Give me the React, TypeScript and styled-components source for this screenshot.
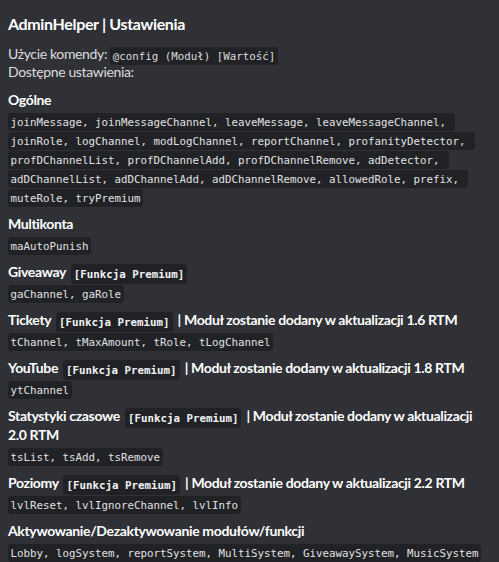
import React from "react";
import styled, { createGlobalStyle } from "styled-components";

const Global = createGlobalStyle`
  html, body { margin: 0; padding: 0; background: #2f3136; }
  body { font-family: Lato, "Noto Sans", sans-serif; }
`;

const Page = styled.div`
  min-height: 562px;
  box-sizing: border-box;
  padding: 13px 12px 0 8px;
  background: #2f3136;
  color: #dcddde;
  letter-spacing: -0.35px;
`;

const Title = styled.div`
  font-size: 16px;
  line-height: 22px;
  font-weight: 700;
  color: #ffffff;
`;

const Description = styled.div`
  margin-top: 10px;
  font-size: 14px;
  line-height: 18px;
`;

const InlineCode = styled.code`
  font-family: "DejaVu Sans Mono", "Liberation Mono", monospace;
  font-size: 10.8px;
  line-height: 1;
  letter-spacing: 0;
  background: #202225;
  border-radius: 3px;
  padding: 2.5px 2.5px;
  white-space: pre;
`;

const Field = styled.div`
  margin-top: 9px;
`;

const FieldName = styled.div`
  font-size: 14px;
  line-height: 19px;
  font-weight: 700;
  color: #ffffff;
  white-space: nowrap;
  margin-bottom: 1px;
`;

const Badge = styled.code`
  font-family: "DejaVu Sans Mono", "Liberation Mono", monospace;
  font-size: 10.8px;
  line-height: 1;
  letter-spacing: 0;
  font-weight: 700;
  color: #f2f3f5;
  background: #202225;
  border-radius: 3px;
  padding: 3.5px 3px;
  margin: 0 2px;
  white-space: pre;
`;

const CodeLine = styled.div`
  line-height: 19px;
  font-size: 14px;
  height: 19px;
`;

const CodeText = styled.code`
  font-family: "DejaVu Sans Mono", "Liberation Mono", monospace;
  font-size: 10.8px;
  line-height: 1;
  letter-spacing: 0;
  color: #e0e1e3;
  background: #202225;
  border-radius: 3px;
  padding: 2.5px 2.5px;
  white-space: pre;
`;

type FieldDef = {
  name: string;
  premium?: boolean;
  suffix?: React.ReactNode;
  lines: string[];
};

const fields: FieldDef[] = [
  {
    name: "Ogólne",
    lines: [
      "joinMessage, joinMessageChannel, leaveMessage, leaveMessageChannel, ",
      "joinRole, logChannel, modLogChannel, reportChannel, profanityDetector, ",
      "profDChannelList, profDChannelAdd, profDChannelRemove, adDetector, ",
      "adDChannelList, adDChannelAdd, adDChannelRemove, allowedRole, prefix, ",
      "muteRole, tryPremium",
    ],
  },
  { name: "Multikonta", lines: ["maAutoPunish"] },
  { name: "Giveaway", premium: true, lines: ["gaChannel, gaRole"] },
  {
    name: "Tickety",
    premium: true,
    suffix: "| Moduł zostanie dodany w aktualizacji 1.6 RTM",
    lines: ["tChannel, tMaxAmount, tRole, tLogChannel"],
  },
  {
    name: "YouTube",
    premium: true,
    suffix: "| Moduł zostanie dodany w aktualizacji 1.8 RTM",
    lines: ["ytChannel"],
  },
  {
    name: "Statystyki czasowe",
    premium: true,
    suffix: (
      <>
        | Moduł zostanie dodany w aktualizacji
        <br />
        2.0 RTM
      </>
    ),
    lines: ["tsList, tsAdd, tsRemove"],
  },
  {
    name: "Poziomy",
    premium: true,
    suffix: "| Moduł zostanie dodany w aktualizacji 2.2 RTM",
    lines: ["lvlReset, lvlIgnoreChannel, lvlInfo"],
  },
  {
    name: "Aktywowanie/Dezaktywowanie modułów/funkcji",
    lines: [
      "Lobby, logSystem, reportSystem, MultiSystem, GiveawaySystem, MusicSystem",
    ],
  },
];

export default function App() {
  return (
    <>
      <Global />
      <Page>
        <Title>AdminHelper | Ustawienia</Title>
        <Description>
          <div>
            Użycie komendy: <InlineCode>@config (Moduł) [Wartość]</InlineCode>
          </div>
          <div>Dostępne ustawienia:</div>
        </Description>
        {fields.map((f) => (
          <Field key={f.name}>
            <FieldName>
              {f.name}
              {f.premium && (
                <>
                  {" "}
                  <Badge>[Funkcja Premium]</Badge>
                </>
              )}
              {f.suffix && <> {f.suffix}</>}
            </FieldName>
            {f.lines.map((l, i) => (
              <CodeLine key={i}>
                <CodeText>{l}</CodeText>
              </CodeLine>
            ))}
          </Field>
        ))}
      </Page>
    </>
  );
}
